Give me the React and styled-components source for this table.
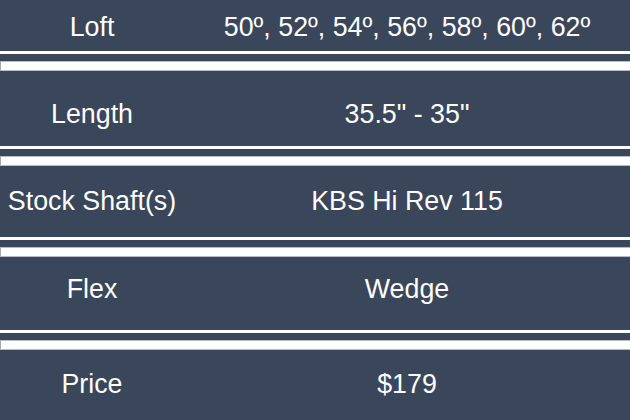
import styled, { createGlobalStyle } from 'styled-components';

const specs = [
  { label: 'Loft', value: '50º, 52º, 54º, 56º, 58º, 60º, 62º', height: 51, top: 12 },
  { label: 'Length', value: '35.5" - 35"', height: 75, top: 28 },
  { label: 'Stock Shaft(s)', value: 'KBS Hi Rev 115', height: 71, top: 19.5 },
  { label: 'Flex', value: 'Wedge', height: 73, top: 16.5 },
  { label: 'Price', value: '$179', height: 70, top: 18.5 },
];

const GlobalStyle = createGlobalStyle`
  html, body {
    margin: 0;
    padding: 0;
    background: #ffffff;
  }
  body {
    width: 630px;
    height: 420px;
    overflow: hidden;
    font-family: "Liberation Sans", Arial, sans-serif;
  }
`;

const SpecTable = styled.div`
  display: flex;
  flex-direction: column;
  width: 630px;
`;

const Row = styled.div`
  display: grid;
  grid-template-columns: 184px 1fr;
  align-items: start;
  height: ${props => props.$height}px;
  padding-top: ${props => props.$top}px;
  box-sizing: border-box;
  background: #3a4659;
  color: #ffffff;
  font-size: 26.8px;
  line-height: 30px;
`;

const Cell = styled.div`
  text-align: center;
  white-space: nowrap;
`;

const Separator = styled.div`
  display: flex;
  flex-direction: column;
`;

const ThinLine = styled.div`
  height: 3px;
  background: #ffffff;
`;

const DarkStrip = styled.div`
  height: 7px;
  background: #3a4659;
`;

const ThickLine = styled.div`
  height: 8px;
  background: #ffffff;
  border-top: 1px solid #b9bec6;
  border-bottom: 1px solid #b9bec6;
  border-left: 1px solid #a3a9b2;
`;

const App = () => {
  return (
    <>
      <GlobalStyle />
      <SpecTable>
        {specs.map((spec, i) => (
          <div key={spec.label}>
            <Row $height={spec.height} $top={spec.top}>
              <Cell>{spec.label}</Cell>
              <Cell>{spec.value}</Cell>
            </Row>
            {i < specs.length - 1 && (
              <Separator>
                <ThinLine />
                <DarkStrip />
                <ThickLine />
              </Separator>
            )}
          </div>
        ))}
      </SpecTable>
    </>
  );
};

export default App;
